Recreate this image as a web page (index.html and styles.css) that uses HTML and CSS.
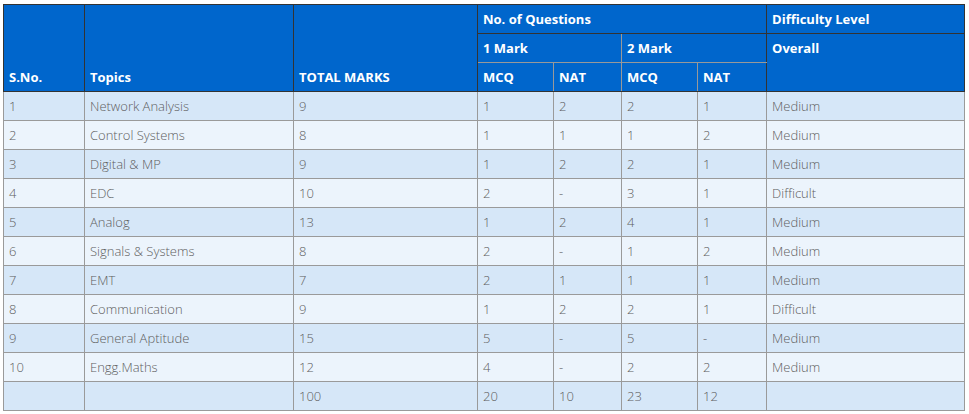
FILE: index.html
```html
<!DOCTYPE html>
<html>
<head>
<meta charset="utf-8">
<link rel="stylesheet" href="styles.css">
</head>
<body>
<table class="marks">
  <colgroup>
    <col class="c-sno"><col class="c-topic"><col class="c-total"><col class="c-q1"><col class="c-q2"><col class="c-q3"><col class="c-q4"><col class="c-diff">
  </colgroup>
  <thead>
    <tr>
      <th rowspan="3" class="bottom dk-r">S.No.</th>
      <th rowspan="3" class="bottom dk-r">Topics</th>
      <th rowspan="3" class="bottom dk-r">TOTAL MARKS</th>
      <th colspan="4" class="dk-r dk-b">No. of Questions</th>
      <th class="dk-b">Difficulty Level</th>
    </tr>
    <tr>
      <th colspan="2" class="lt-r lt-b">1 Mark</th>
      <th colspan="2" class="dk-r lt-b">2 Mark</th>
      <th rowspan="2" class="top">Overall</th>
    </tr>
    <tr>
      <th class="lt-r">MCQ</th>
      <th class="lt-r">NAT</th>
      <th class="lt-r">MCQ</th>
      <th class="dk-r">NAT</th>
    </tr>
  </thead>
  <tbody>
    <tr><td>1</td><td>Network Analysis</td><td>9</td><td>1</td><td>2</td><td>2</td><td>1</td><td>Medium</td></tr>
    <tr><td>2</td><td>Control Systems</td><td>8</td><td>1</td><td>1</td><td>1</td><td>2</td><td>Medium</td></tr>
    <tr><td>3</td><td>Digital &amp; MP</td><td>9</td><td>1</td><td>2</td><td>2</td><td>1</td><td>Medium</td></tr>
    <tr><td>4</td><td>EDC</td><td>10</td><td>2</td><td>-</td><td>3</td><td>1</td><td>Difficult</td></tr>
    <tr><td>5</td><td>Analog</td><td>13</td><td>1</td><td>2</td><td>4</td><td>1</td><td>Medium</td></tr>
    <tr><td>6</td><td>Signals &amp; Systems</td><td>8</td><td>2</td><td>-</td><td>1</td><td>2</td><td>Medium</td></tr>
    <tr><td>7</td><td>EMT</td><td>7</td><td>2</td><td>1</td><td>1</td><td>1</td><td>Medium</td></tr>
    <tr><td>8</td><td>Communication</td><td>9</td><td>1</td><td>2</td><td>2</td><td>1</td><td>Difficult</td></tr>
    <tr><td>9</td><td>General Aptitude</td><td>15</td><td>5</td><td>-</td><td>5</td><td>-</td><td>Medium</td></tr>
    <tr><td>10</td><td>Engg.Maths</td><td>12</td><td>4</td><td>-</td><td>2</td><td>2</td><td>Medium</td></tr>
    <tr><td></td><td></td><td>100</td><td>20</td><td>10</td><td>23</td><td>12</td><td></td></tr>
  </tbody>
</table>
</body>
</html>
```
FILE: styles.css
```css
html, body {
  margin: 0;
  padding: 0;
  background: #ffffff;
}
body {
  padding: 4px 0 0 3px;
  font-family: "Open Sans", "Liberation Sans", sans-serif;
}
.marks {
  border-collapse: collapse;
  table-layout: fixed;
  width: 962px;
  font-size: 13px;
}
.c-sno { width: 81px; }
.c-topic { width: 209px; }
.c-total { width: 184px; }
.c-q1 { width: 76px; }
.c-q2 { width: 68px; }
.c-q3 { width: 76px; }
.c-q4 { width: 69px; }
.c-diff { width: 198px; }

.marks th, .marks td {
  height: 29px;
  padding: 0 5px;
  line-height: 18px;
  text-align: left;
  box-sizing: border-box;
}
.marks thead th {
  background: #0066cc;
  color: #ffffff;
  font-weight: 700;
  border: 1px solid #333333;
  vertical-align: middle;
}
.marks thead th.bottom { vertical-align: bottom; padding-bottom: 5px; }
.marks thead th.top { vertical-align: top; padding-top: 5px; }
.marks thead th.lt-r { border-right-color: #999999; }
.marks thead th.lt-b { border-bottom-color: #999999; }
.marks thead tr:nth-child(3) th { border-left-color: #999999; }
.marks thead tr:nth-child(3) th:first-child { border-left-color: #333333; }
.marks thead th.dk-r { border-right-color: #333333; }

.marks td {
  color: #5e5e5e;
  font-weight: 300;
  border: 1px solid #9a9a9a;
  vertical-align: middle;
}
.marks tbody tr:nth-child(odd) td { background: #d6e7f8; }
.marks tbody tr:nth-child(even) td { background: #ecf4fc; }
```
